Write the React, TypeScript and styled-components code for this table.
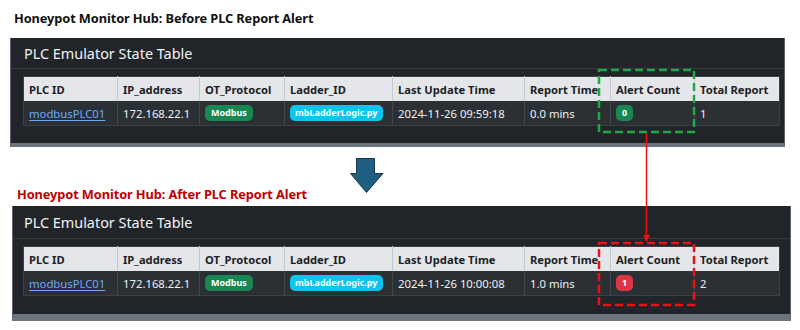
import React from 'react';
import styled, { createGlobalStyle } from 'styled-components';

interface PlcRow {
  id: string;
  ip: string;
  protocol: string;
  ladder: string;
  updated: string;
  reportTime: string;
  alerts: number;
  total: number;
}

const GlobalStyle = createGlobalStyle`
  html, body {
    margin: 0;
    padding: 0;
    background: #ffffff;
  }
  body {
    font-family: "Noto Sans", "Open Sans", sans-serif;
  }
`;

const Page = styled.div`
  position: relative;
  width: 800px;
  height: 330px;
  overflow: hidden;
  padding-top: 10px;
  box-sizing: border-box;
`;

const Caption = styled.h2<{ $alert?: boolean }>`
  margin: 0;
  padding-left: ${(p) => (p.$alert ? '17px' : '14px')};
  font-family: "Noto Sans", sans-serif;
  font-weight: 700;
  font-size: 12.8px;
  line-height: 16px;
  letter-spacing: -0.1px;
  color: ${(p) => (p.$alert ? '#c00000' : '#111111')};
  white-space: nowrap;
`;

const Panel = styled.section<{ $left: number; $width: number; $strip: number; $top: number }>`
  margin-left: ${(p) => p.$left}px;
  margin-top: ${(p) => p.$top}px;
  width: ${(p) => p.$width}px;
  box-sizing: border-box;
  background: #212529;
  border-left: 1px solid #5d646b;
  border-right: 1px solid #5d646b;
  border-bottom: ${(p) => p.$strip}px solid #6c737a;
`;

const PanelHeader = styled.div<{ $height: number; $pad: number }>`
  height: ${(p) => p.$height}px;
  box-sizing: border-box;
  padding-left: ${(p) => p.$pad}px;
  display: flex;
  align-items: center;
  border-bottom: 1px solid #373c42;
  color: #f1f3f5;
  font-size: 14.4px;
  font-weight: 400;
`;

const PanelBody = styled.div<{ $padL: number; $padB: number }>`
  padding: 7px 0 ${(p) => p.$padB}px ${(p) => p.$padL}px;
`;

const Table = styled.table`
  border-collapse: collapse;
  table-layout: fixed;
  width: 756px;
  font-size: 11.3px;
  border: 1px solid #3b4046;
`;

const HeadCell = styled.th`
  height: 24px;
  padding: 0 5px;
  text-align: left;
  background: #e4e6e9;
  color: #1d2125;
  font-weight: 700;
  font-size: 11.2px;
  border-left: 1px solid #c7cbcf;
  white-space: nowrap;
  overflow: visible;
  &:first-child {
    border-left: none;
  }
`;

const Cell = styled.td`
  height: 24px;
  padding: 0 5px;
  background: #2b3035;
  color: #eef0f2;
  border-left: 1px solid #41464c;
  white-space: nowrap;
  &:first-child {
    border-left: none;
  }
`;

const PlcLink = styled.a`
  color: #6ea8fe;
  text-decoration: underline;
  text-underline-offset: 2px;
`;

const Badge = styled.span<{ $tone: 'green' | 'cyan' | 'red' }>`
  display: inline-block;
  vertical-align: middle;
  padding: 0 ${(p) => (p.$tone === 'cyan' ? '5px' : '6px')};
  line-height: 16px;
  border-radius: 5px;
  font-size: 9px;
  font-weight: 700;
  color: #ffffff;
  background: ${(p) =>
    p.$tone === 'green' ? '#198754' : p.$tone === 'cyan' ? '#0dc4ee' : '#dc3545'};
`;

const Transition = styled.div`
  display: flex;
  align-items: flex-start;
  height: 59px;
`;

const TransitionCaption = styled.div`
  align-self: flex-end;
  width: 350px;
  margin-bottom: 4px;
`;

const DownArrow = styled.svg`
  margin-top: 11px;
  display: block;
`;

const Overlay = styled.svg`
  position: absolute;
  left: 0;
  top: 0;
  pointer-events: none;
`;

const cols = [94, 82, 85, 108, 132, 86, 84, 85];
const heads = ['PLC ID', 'IP_address', 'OT_Protocol', 'Ladder_ID', 'Last Update Time', 'Report Time', 'Alert Count', 'Total Report'];

const StateTable: React.FC<{ row: PlcRow }> = ({ row }) => (
  <Table>
    <colgroup>
      {cols.map((w, i) => (
        <col key={i} style={{ width: w }} />
      ))}
    </colgroup>
    <thead>
      <tr>
        {heads.map((h) => (
          <HeadCell key={h}>{h}</HeadCell>
        ))}
      </tr>
    </thead>
    <tbody>
      <tr>
        <Cell>
          <PlcLink href="#">{row.id}</PlcLink>
        </Cell>
        <Cell>{row.ip}</Cell>
        <Cell>
          <Badge $tone="green">{row.protocol}</Badge>
        </Cell>
        <Cell>
          <Badge $tone="cyan">{row.ladder}</Badge>
        </Cell>
        <Cell>{row.updated}</Cell>
        <Cell>{row.reportTime}</Cell>
        <Cell>
          <Badge $tone={row.alerts > 0 ? 'red' : 'green'}>{row.alerts}</Badge>
        </Cell>
        <Cell>{row.total}</Cell>
      </tr>
    </tbody>
  </Table>
);

const before: PlcRow = {
  id: 'modbusPLC01',
  ip: '172.168.22.1',
  protocol: 'Modbus',
  ladder: 'mbLadderLogic.py',
  updated: '2024-11-26 09:59:18',
  reportTime: '0.0 mins',
  alerts: 0,
  total: 1,
};

const after: PlcRow = {
  ...before,
  updated: '2024-11-26 10:00:08',
  reportTime: '1.0 mins',
  alerts: 1,
  total: 2,
};

export default function App() {
  return (
    <>
      <GlobalStyle />
      <Page>
        <Caption>Honeypot Monitor Hub: Before PLC Report Alert</Caption>
        <Panel $left={10} $width={775} $strip={4} $top={12}>
          <PanelHeader $height={31} $pad={13}>PLC Emulator State Table</PanelHeader>
          <PanelBody $padL={12} $padB={17}>
            <StateTable row={before} />
          </PanelBody>
        </Panel>

        <Transition>
          <TransitionCaption>
            <Caption $alert>Honeypot Monitor Hub: After PLC Report Alert</Caption>
          </TransitionCaption>
          <DownArrow width="34" height="36" viewBox="0 0 34 36">
            <path
              d="M6.5 0.5 H24.5 V15.5 H33 L16.5 34.5 L0.5 15.5 H6.5 Z"
              fill="#1f5d82"
              stroke="#17384d"
              strokeWidth="1"
            />
          </DownArrow>
        </Transition>

        <Panel $left={12} $width={779} $strip={7} $top={0}>
          <PanelHeader $height={33} $pad={11}>PLC Emulator State Table</PanelHeader>
          <PanelBody $padL={10} $padB={18}>
            <StateTable row={after} />
          </PanelBody>
        </Panel>

        <Overlay width="800" height="330" viewBox="0 0 800 330">
          <rect x="599" y="70" width="95" height="62" fill="none" stroke="#1ea84a" strokeWidth="2.5" strokeDasharray="8 4" />
          <line x1="646.5" y1="133" x2="646.5" y2="236" stroke="#ee1111" strokeWidth="1.5" />
          <path d="M643 235 L650 235 L646.5 242 Z" fill="#ee1111" />
          <rect x="599" y="243" width="95" height="62" fill="none" stroke="#ee1111" strokeWidth="2.5" strokeDasharray="8 4" />
        </Overlay>
      </Page>
    </>
  );
}
